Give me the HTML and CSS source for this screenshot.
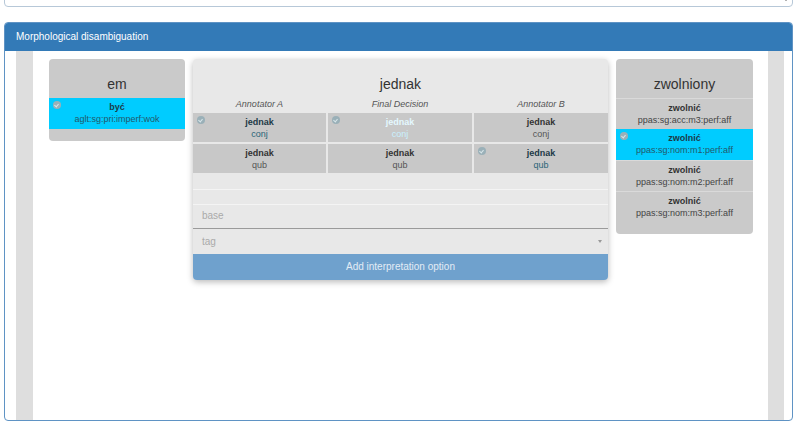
FILE: index.html
```html
<!DOCTYPE html>
<html>
<head>
<meta charset="utf-8">
<link rel="stylesheet" href="styles.css">
</head>
<body>
<div class="page">
  <div class="topbox">
    <span class="toptext">jednak zwolniony pracownik przyjęty do pracy</span>
    <span class="toparrow"></span>
  </div>
  <div class="panel">
    <div class="panel-heading">Morphological disambiguation</div>
    <div class="panel-body">
      <div class="sidebar"></div>
      <div class="tokens">
        <div class="card small">
          <div class="card-title">em</div>
          <div class="opt selected">
            <span class="check"></span>
            <div class="base">być</div>
            <div class="tag">aglt:sg:pri:imperf:wok</div>
          </div>
          <div class="card-foot"></div>
        </div>

        <div class="card big">
          <div class="card-title">jednak</div>
          <div class="grid">
            <div class="label">Annotator A</div>
            <div class="label">Final Decision</div>
            <div class="label">Annotator B</div>

            <div class="cell selected"><span class="check"></span><div class="base">jednak</div><div class="tag">conj</div></div>
            <div class="cell selected final"><span class="check"></span><div class="base">jednak</div><div class="tag">conj</div></div>
            <div class="cell"><div class="base">jednak</div><div class="tag">conj</div></div>

            <div class="cell"><div class="base">jednak</div><div class="tag">qub</div></div>
            <div class="cell"><div class="base">jednak</div><div class="tag">qub</div></div>
            <div class="cell selected"><span class="check"></span><div class="base">jednak</div><div class="tag">qub</div></div>
          </div>
          <div class="blank b1"></div>
          <div class="blank b2"></div>
          <div class="field base-field">base</div>
          <div class="field tag-field">tag<span class="selarrow"></span></div>
          <div class="addbtn">Add interpretation option</div>
        </div>

        <div class="card small">
          <div class="card-title">zwolniony</div>
          <div class="opt sep"><div class="base">zwolnić</div><div class="tag">ppas:sg:acc:m3:perf:aff</div></div>
          <div class="opt selected"><span class="check"></span><div class="base">zwolnić</div><div class="tag">ppas:sg:nom:m1:perf:aff</div></div>
          <div class="opt sep"><div class="base">zwolnić</div><div class="tag">ppas:sg:nom:m2:perf:aff</div></div>
          <div class="opt sep"><div class="base">zwolnić</div><div class="tag">ppas:sg:nom:m3:perf:aff</div></div>
          <div class="card-foot"></div>
        </div>
      </div>
      <div class="sidebar right"></div>
    </div>
  </div>
</div>
</body>
</html>
```

FILE: styles.css
```css
* { box-sizing: border-box; }
html, body { margin: 0; padding: 0; background: #fff; }
body { font-family: "Liberation Sans", Arial, sans-serif; color: #333; overflow: hidden; }
.page { padding: 0 4px 0 4px; }

.topbox {
  height: 28px;
  margin-top: -21px;
  border: 1px solid #b7c8d8;
  border-radius: 4px;
  position: relative;
  padding: 7px 12px 0;
  font-size: 11px;
  color: #999;
  line-height: 14px;
  white-space: nowrap;
}
.toptext { letter-spacing: 0.5px; }
.toparrow {
  position: absolute;
  right: 3px;
  top: 18px;
  width: 0; height: 0;
  border-left: 3px solid transparent;
  border-right: 3px solid transparent;
  border-top: 3px solid #666;
}

.panel {
  margin-top: 15px;
  border: 1px solid #5f93c4;
  border-radius: 4px;
  height: 399px;
  display: flex;
  flex-direction: column;
  overflow: hidden;
}
.panel-heading {
  background: #337ab7;
  color: #fff;
  font-size: 10px;
  height: 28px;
  line-height: 28px;
  padding-left: 11px;
}
.panel-body {
  flex: 1;
  display: flex;
  padding: 0 8px 0 11px;
}
.sidebar { width: 18px; background: #dedede; }
.sidebar.right { width: 17px; }
.tokens {
  flex: 1;
  display: flex;
  align-items: flex-start;
  gap: 8px;
  padding: 8px 15px 8px 16px;
}

.card { border-radius: 4px; text-align: center; }
.card.small { width: 136px; background: #cacaca; overflow: hidden; }
.card.small:last-child { width: 137px; }
.card-title {
  font-size: 14px;
  line-height: 16px;
  padding: 17px 0 6px;
  height: 39px;
  color: #333;
}
.card-foot { height: 12px; }

.opt { position: relative; padding: 3px 0; font-size: 9px; line-height: 12px; }
.opt.sep { border-top: 1px solid #dadada; padding: 3px 0 3px; }
.card.small .opt.selected { padding: 3px 0 4px; }
.base { font-weight: bold; color: #333; }
.tag { color: #444; }
.selected { background: #00ccff; }
.selected .base { color: #1d3a47; }
.selected .tag { color: #22596b; }

.check {
  position: absolute;
  left: 4px;
  top: 3px;
  width: 8px; height: 8px;
  border-radius: 50%;
  background: #9ab0b8;
}
.check::after {
  content: "";
  position: absolute;
  left: 2.5px; top: 1.5px;
  width: 2px; height: 3px;
  border-right: 1px solid #d8e6ea;
  border-bottom: 1px solid #d8e6ea;
  transform: rotate(40deg);
}

.card.big {
  width: 415px;
  background: #e8e8e8;
  box-shadow: 0 2px 6px rgba(0,0,0,0.28);
}
.card.big .card-title { height: 38px; padding-bottom: 5px; }
.grid {
  display: grid;
  grid-template-columns: 133px 144px 134px;
  column-gap: 2px;
  row-gap: 2px;
}
.label {
  font-style: italic;
  font-size: 9px;
  line-height: 15px;
  height: 14px;
  color: #555;
}
.cell {
  position: relative;
  background: #c8c8c8;
  height: 29px;
  padding: 3px 0 2px;
  font-size: 9px;
  line-height: 12px;
}
.cell .tag { color: #555; }
.cell.selected .tag { color: #2a6477; }
.cell.final .base { color: #e4f8ff; }
.cell.final .tag { color: #c9f0ff; }

.blank { border-bottom: 1px solid #f4f4f4; }
.b1 { height: 17px; }
.b2 { height: 15px; }
.field {
  text-align: left;
  font-size: 10px;
  color: #aaa;
  padding-left: 9px;
  position: relative;
}
.base-field { height: 24px; line-height: 22px; border-bottom: 1px solid #9a9a9a; }
.tag-field { height: 25px; line-height: 25px; }
.selarrow {
  position: absolute;
  right: 6px;
  top: 11px;
  width: 0; height: 0;
  border-left: 2.5px solid transparent;
  border-right: 2.5px solid transparent;
  border-top: 3px solid #999;
}
.addbtn {
  background: #6fa1cd;
  color: #e3ecf5;
  font-size: 10px;
  height: 26px;
  line-height: 26px;
  border-radius: 0 0 4px 4px;
}
```
